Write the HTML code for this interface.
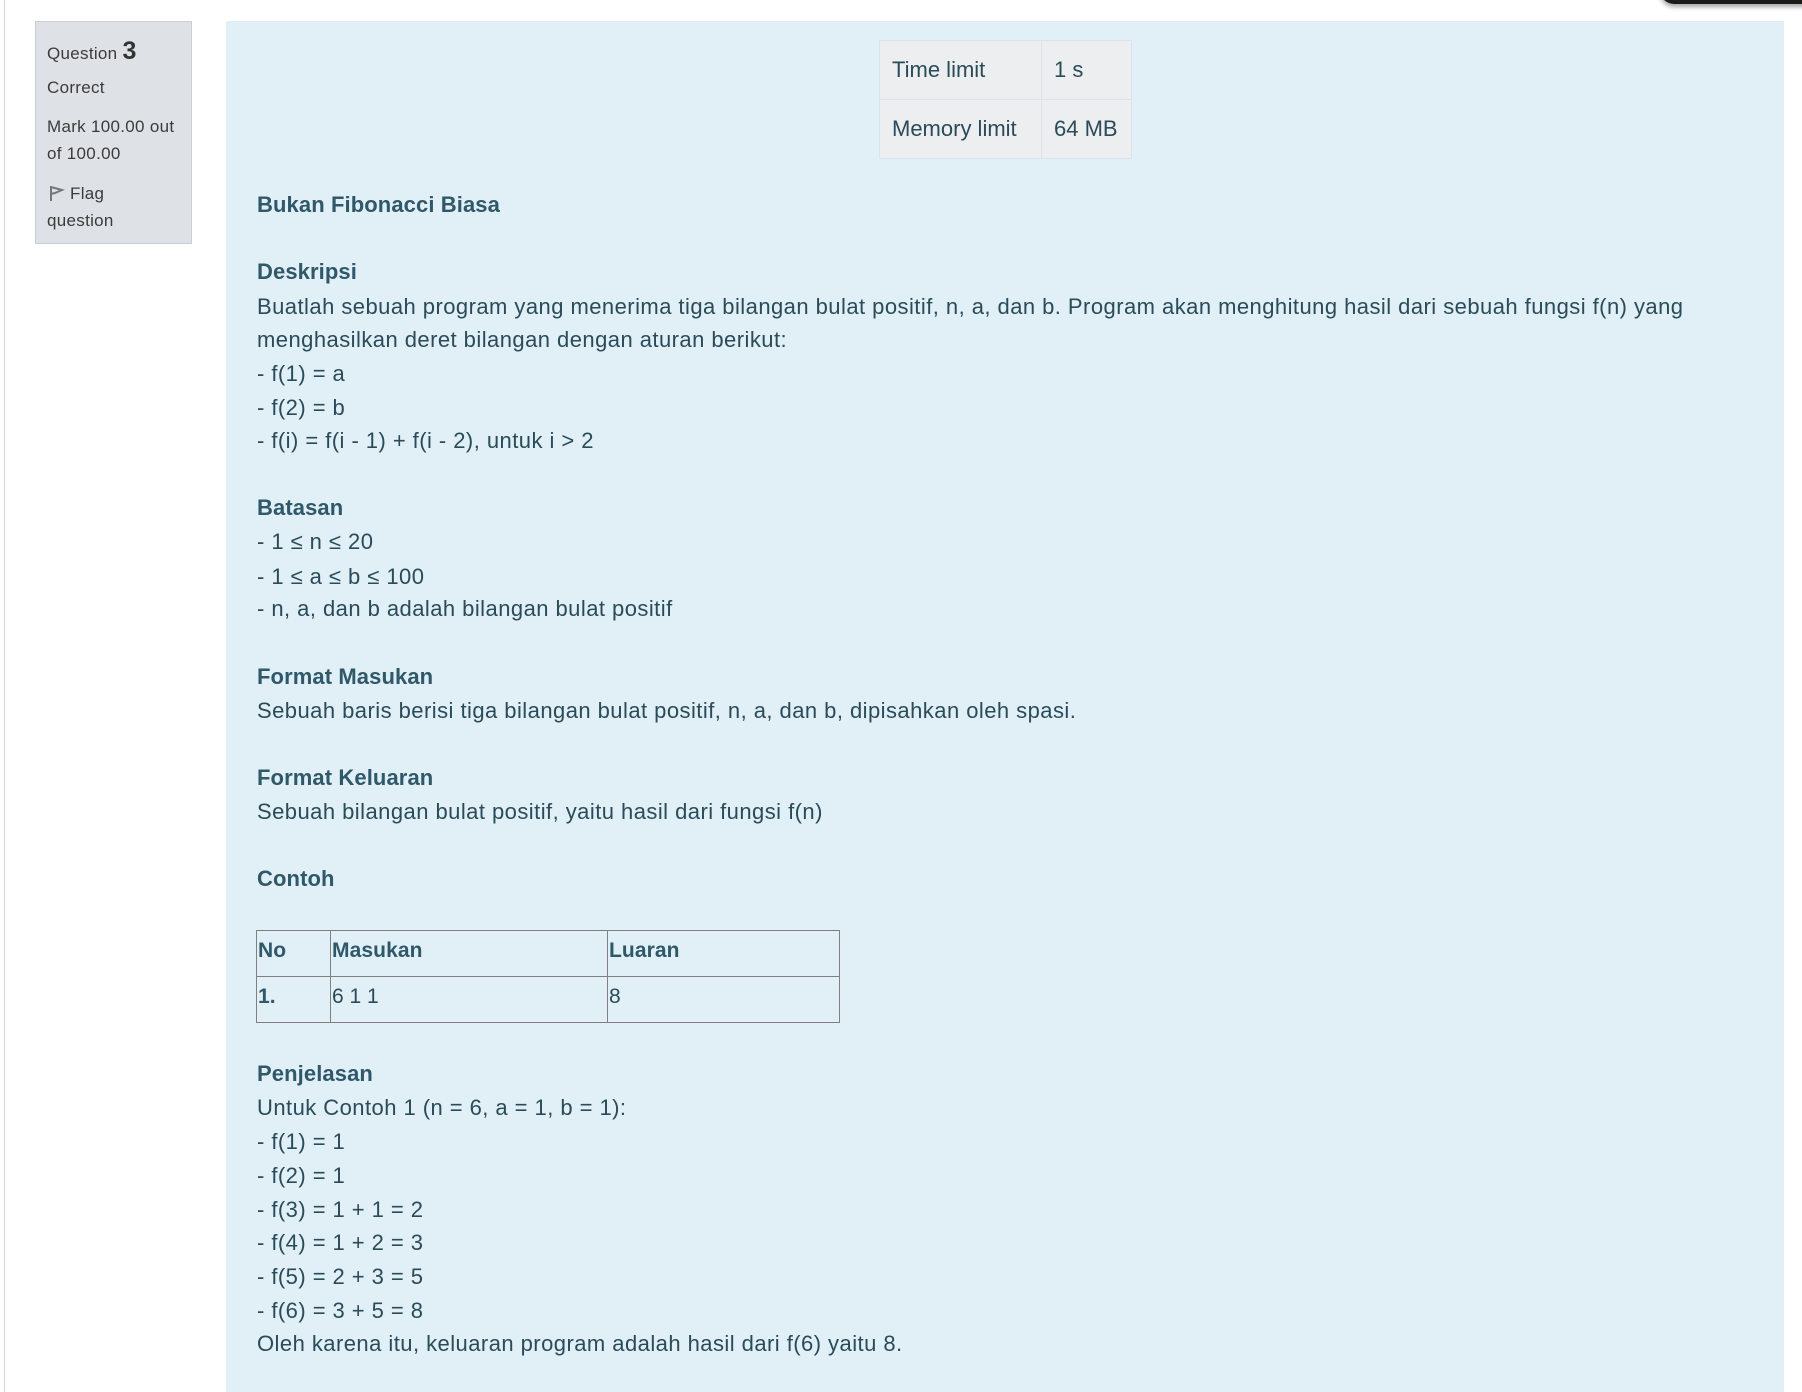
<!DOCTYPE html>
<html><head><meta charset="utf-8"><style>
body{margin:0;width:1802px;height:1392px;background:#fff;position:relative;overflow:hidden;font-family:"Liberation Sans",sans-serif;color:#2a4b58}
.vl{position:absolute;left:4px;top:0;width:1px;height:1392px;background:#d6d6d6}
.info{position:absolute;left:35px;top:21px;width:157px;height:223px;background:#dee2e6;border:1px solid #c9ced3;box-sizing:border-box;color:#3b3b3b;font-size:17px;letter-spacing:0.3px}
.info div{position:absolute;left:11px;white-space:nowrap}
.main{position:absolute;left:226px;top:21px;width:1558px;height:1371px;background:#e1eff7}
.t{position:absolute;left:257px;font-size:22px;letter-spacing:0.45px;white-space:nowrap;line-height:24px}
.b{font-weight:bold;color:#2f5869;letter-spacing:0.1px}
.lim{position:absolute;left:879px;top:40px;border-collapse:collapse;font-size:22px;white-space:nowrap}
.lim td{border:1px solid #dde2e6;background:#edeeef;height:58px;padding:0 12px;color:#2a4b58}
.smp{position:absolute;left:256px;top:930px;border-collapse:collapse;font-size:21px}
.smp td{border:1.5px solid #808080;height:46px;vertical-align:top;padding:8px 1px 0;box-sizing:border-box}
.top{position:absolute;left:1660px;top:-10px;width:160px;height:14px;background:#1e1a1a;border-radius:0 0 0 14px;box-shadow:0 3px 5px rgba(0,0,0,.35)}
</style></head><body>
<div class="vl"></div>
<div class="top"></div>
<div class="info">
<div style="top:15px">Question <b style="font-size:25px;color:#333">3</b></div>
<div style="top:56px">Correct</div>
<div style="top:95px">Mark 100.00 out</div>
<div style="top:122px">of 100.00</div>
<div style="top:162px"><svg width="18" height="18" viewBox="0 0 18 18" style="vertical-align:-3px"><path d="M4 2 L4 17 M4 3 L15 6 L8 9 L4 10" fill="none" stroke="#777" stroke-width="2"/></svg> Flag</div>
<div style="top:189px">question</div>
</div>
<div class="main"></div>
<table class="lim"><tr><td style="width:137px">Time limit</td><td style="width:65px">1 s</td></tr><tr><td>Memory limit</td><td>64 MB</td></tr></table>
<div class="t b" style="top:193px">Bukan Fibonacci Biasa</div>
<div class="t b" style="top:260px">Deskripsi</div>
<div class="t" style="top:295px">Buatlah sebuah program yang menerima tiga bilangan bulat positif, n, a, dan b. Program akan menghitung hasil dari sebuah fungsi f(n) yang</div>
<div class="t" style="top:328px">menghasilkan deret bilangan dengan aturan berikut:</div>
<div class="t" style="top:362px">- f(1) = a</div>
<div class="t" style="top:396px">- f(2) = b</div>
<div class="t" style="top:429px">- f(i) = f(i - 1) + f(i - 2), untuk i &gt; 2</div>
<div class="t b" style="top:496px">Batasan</div>
<div class="t" style="top:530px">- 1 ≤ n ≤ 20</div>
<div class="t" style="top:565px">- 1 ≤ a ≤ b ≤ 100</div>
<div class="t" style="top:597px">- n, a, dan b adalah bilangan bulat positif</div>
<div class="t b" style="top:665px">Format Masukan</div>
<div class="t" style="top:699px">Sebuah baris berisi tiga bilangan bulat positif, n, a, dan b, dipisahkan oleh spasi.</div>
<div class="t b" style="top:766px">Format Keluaran</div>
<div class="t" style="top:800px">Sebuah bilangan bulat positif, yaitu hasil dari fungsi f(n)</div>
<div class="t b" style="top:867px">Contoh</div>
<table class="smp"><tr><td class="b" style="width:74px">No</td><td class="b" style="width:277px">Masukan</td><td class="b" style="width:232px">Luaran</td></tr>
<tr><td class="b">1.</td><td>6 1 1</td><td>8</td></tr></table>
<div class="t b" style="top:1062px">Penjelasan</div>
<div class="t" style="top:1096px">Untuk Contoh 1 (n = 6, a = 1, b = 1):</div>
<div class="t" style="top:1130px">- f(1) = 1</div>
<div class="t" style="top:1164px">- f(2) = 1</div>
<div class="t" style="top:1198px">- f(3) = 1 + 1 = 2</div>
<div class="t" style="top:1231px">- f(4) = 1 + 2 = 3</div>
<div class="t" style="top:1265px">- f(5) = 2 + 3 = 5</div>
<div class="t" style="top:1299px">- f(6) = 3 + 5 = 8</div>
<div class="t" style="top:1332px">Oleh karena itu, keluaran program adalah hasil dari f(6) yaitu 8.</div>
</body></html>
